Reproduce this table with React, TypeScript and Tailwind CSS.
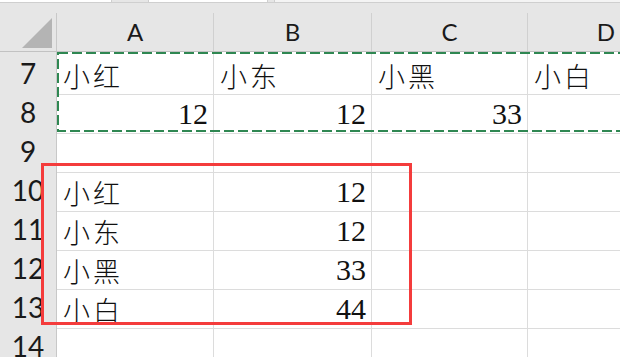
import React from 'react';

type Cell = { v: string; num?: boolean };

const columns = ['A', 'B', 'C', 'D'];

const rows: { n: number; cells: Cell[] }[] = [
  { n: 7, cells: [{ v: '小红' }, { v: '小东' }, { v: '小黑' }, { v: '小白' }] },
  { n: 8, cells: [{ v: '12', num: true }, { v: '12', num: true }, { v: '33', num: true }, { v: '' }] },
  { n: 9, cells: [{ v: '' }, { v: '' }, { v: '' }, { v: '' }] },
  { n: 10, cells: [{ v: '小红' }, { v: '12', num: true }, { v: '' }, { v: '' }] },
  { n: 11, cells: [{ v: '小东' }, { v: '12', num: true }, { v: '' }, { v: '' }] },
  { n: 12, cells: [{ v: '小黑' }, { v: '33', num: true }, { v: '' }, { v: '' }] },
  { n: 13, cells: [{ v: '小白' }, { v: '44', num: true }, { v: '' }, { v: '' }] },
  { n: 14, cells: [{ v: '' }, { v: '' }, { v: '' }, { v: '' }] },
];

const headFont = { fontFamily: 'Lato, "Liberation Sans", sans-serif' };
const numFont = { fontFamily: '"Liberation Serif", "Times New Roman", serif' };
const cjkFont = { fontFamily: '"Noto Sans CJK SC", "Noto Sans", sans-serif' };

export default function App() {
  return (
    <div className="relative w-[620px] h-[357px] overflow-hidden bg-white">
      {/* formula bar edge */}
      <div className="flex h-[3px] bg-[#e6e6e6] border-b border-[#cfcfcf]">
        <div className="w-[112px] bg-white border-r border-[#cfcfcf]" />
        <div className="ml-[36px] w-[120px] bg-white border-x border-[#cfcfcf]" />
        <div className="ml-[6px] flex-1 bg-[#f4f4f4] border-l border-[#cfcfcf]" />
      </div>

      {/* column headers */}
      <div className="bg-[#e6e6e6] pt-[10px]">
        <div className="grid grid-cols-[57px_157px_158px_156px_157px] h-[39px] border-b border-[#c2c2c2]" style={headFont}>
          <div className="relative border-r border-[#c8c8c8]">
            <svg className="absolute right-[4px] bottom-[3px]" width="30" height="30" viewBox="0 0 30 30">
              <polygon points="30,0 30,30 0,30" fill="#b4b4b4" />
            </svg>
          </div>
          {columns.map((c) => (
            <div key={c} className="flex items-center justify-center border-r border-[#d0d0d0] text-[24px] text-[#1a1a1a]">
              {c}
            </div>
          ))}
        </div>
      </div>

      {/* cells */}
      <div>
        {rows.map((r) => (
          <div key={r.n} className="grid grid-cols-[57px_157px_158px_156px_157px] h-[39px]">
            <div
              className="flex items-center justify-center bg-[#e6e6e6] border-r border-b border-[#c8c8c8] text-[28px] text-[#1a1a1a]"
              style={headFont}
            >
              {r.n}
            </div>
            {r.cells.map((cell, i) =>
              cell.num ? (
                <div
                  key={i}
                  className="flex items-end justify-end border-r border-b border-[#dcdcdc] pb-[4px] pr-[5px] leading-none text-[30px] text-[#111]"
                  style={numFont}
                >
                  {cell.v}
                </div>
              ) : (
                <div
                  key={i}
                  className="flex items-end justify-start border-r border-b border-[#dcdcdc] pb-[5px] pl-[6px] leading-none text-[27px] font-light tracking-[3px] text-[#111]"
                  style={cjkFont}
                >
                  {cell.v}
                </div>
              )
            )}
          </div>
        ))}
      </div>

      {/* copy marquee around A7:D8 */}
      <svg className="absolute left-0 top-0 pointer-events-none" width="620" height="140">
        <rect x="58" y="53" width="700" height="78" fill="none" stroke="#ffffff" strokeWidth="2" />
        <rect x="58" y="53" width="700" height="78" fill="none" stroke="#2f8752" strokeWidth="2" strokeDasharray="10 4" />
      </svg>

      {/* highlight box over A10:B13 */}
      <div className="absolute left-[41px] top-[163px] w-[371px] h-[162px] border-[3px] border-[#f43c3c] pointer-events-none" />
    </div>
  );
}
